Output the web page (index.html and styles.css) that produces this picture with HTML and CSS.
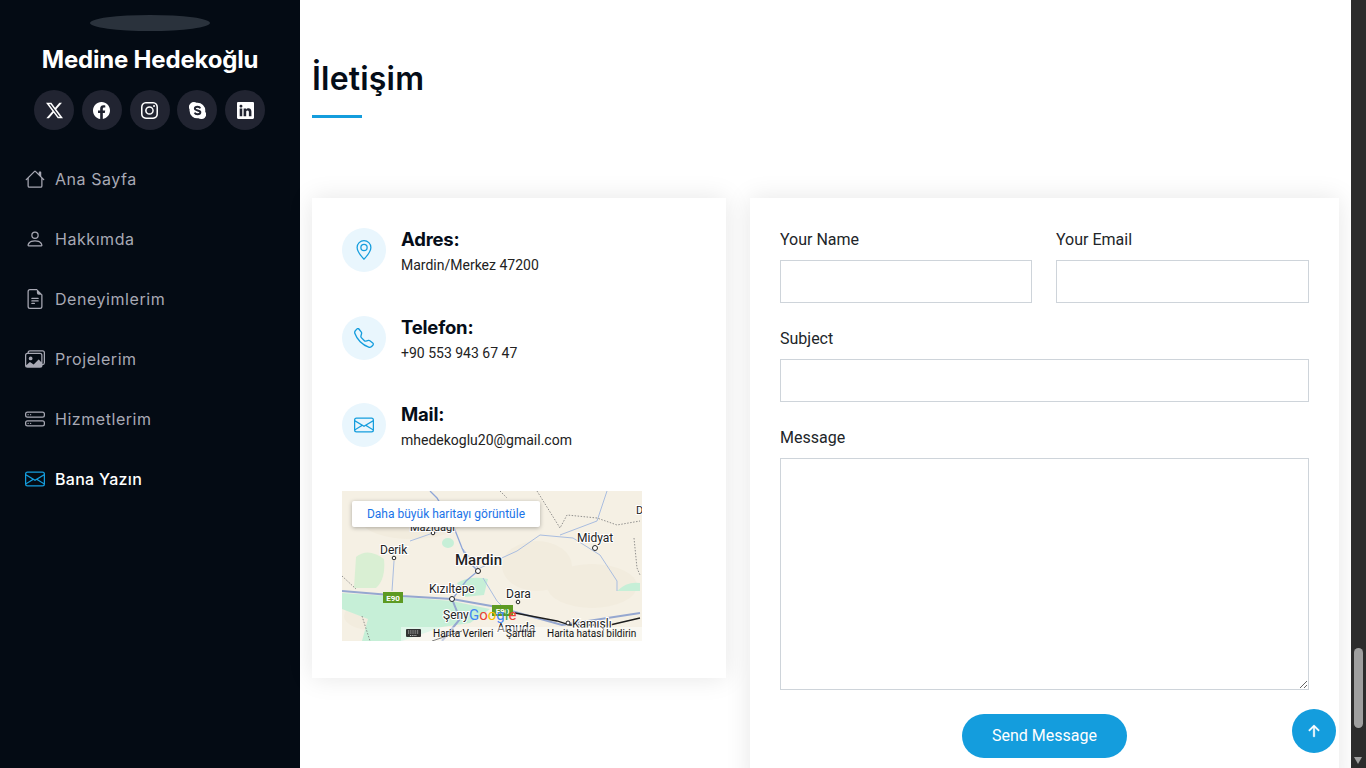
FILE: index.html
```html
<!DOCTYPE html>
<html lang="tr">
<head>
<meta charset="utf-8">
<title>Medine Hedekoğlu</title>
<link rel="stylesheet" href="styles.css">
</head>
<body>
<div class="page">
<aside class="sidebar">
  <div class="avatar"></div>
  <h1 class="name">Medine Hedekoğlu</h1>
  <div class="socials">
    <a class="social"><svg viewBox="0 0 16 16"><path d="M12.6.75h2.454l-5.36 6.142L16 15.25h-4.937l-3.867-5.07-4.425 5.07H.316l5.733-6.57L0 .75h5.063l3.495 4.633L12.601.75Zm-.86 13.028h1.36L4.323 2.145H2.865z"/></svg></a>
    <a class="social"><svg viewBox="0 0 16 16"><path d="M16 8.049c0-4.446-3.582-8.05-8-8.05C3.58 0-.002 3.603-.002 8.05c0 4.017 2.926 7.347 6.75 7.951v-5.625h-2.03V8.05H6.75V6.275c0-2.017 1.195-3.131 3.022-3.131.876 0 1.791.157 1.791.157v1.98h-1.009c-.993 0-1.303.621-1.303 1.258v1.51h2.218l-.354 2.326H9.25V16c3.824-.604 6.75-3.934 6.75-7.951"/></svg></a>
    <a class="social"><svg viewBox="0 0 16 16"><path d="M8 0C5.829 0 5.556.01 4.703.048 3.85.088 3.269.222 2.76.42a3.9 3.9 0 0 0-1.417.923A3.9 3.9 0 0 0 .42 2.76C.222 3.268.087 3.85.048 4.7.01 5.555 0 5.827 0 8.001c0 2.172.01 2.444.048 3.297.04.852.174 1.433.372 1.942.205.526.478.972.923 1.417.444.445.89.719 1.416.923.51.198 1.09.333 1.942.372C5.555 15.99 5.827 16 8 16s2.444-.01 3.298-.048c.851-.04 1.434-.174 1.943-.372a3.9 3.9 0 0 0 1.416-.923c.445-.445.718-.891.923-1.417.197-.509.332-1.09.372-1.942C15.99 10.445 16 10.173 16 8s-.01-2.445-.048-3.299c-.04-.851-.175-1.433-.372-1.941a3.9 3.9 0 0 0-.923-1.417A3.9 3.9 0 0 0 13.24.42c-.51-.198-1.092-.333-1.943-.372C10.443.01 10.172 0 7.998 0zm-.717 1.442h.718c2.136 0 2.389.007 3.232.046.78.035 1.204.166 1.486.275.373.145.64.319.92.599s.453.546.598.92c.11.281.24.705.275 1.485.039.843.047 1.096.047 3.231s-.008 2.389-.047 3.232c-.035.78-.166 1.203-.275 1.485a2.5 2.5 0 0 1-.599.919c-.28.28-.546.453-.92.598-.28.11-.704.24-1.485.276-.843.038-1.096.047-3.232.047s-2.39-.009-3.233-.047c-.78-.036-1.203-.166-1.485-.276a2.5 2.5 0 0 1-.92-.598 2.5 2.5 0 0 1-.6-.92c-.109-.281-.24-.705-.275-1.485-.038-.843-.046-1.096-.046-3.233s.008-2.388.046-3.231c.036-.78.166-1.204.276-1.486.145-.373.319-.64.599-.92s.546-.453.92-.598c.282-.11.705-.24 1.485-.276.738-.034 1.024-.044 2.515-.045zm4.988 1.328a.96.96 0 1 0 0 1.92.96.96 0 0 0 0-1.92m-4.27 1.122a4.109 4.109 0 1 0 0 8.217 4.109 4.109 0 0 0 0-8.217m0 1.441a2.667 2.667 0 1 1 0 5.334 2.667 2.667 0 0 1 0-5.334"/></svg></a>
    <a class="social"><svg viewBox="0 0 16 16"><path d="M4.67 0c.88 0 1.73.25 2.47.7a7.42 7.42 0 0 1 6.02 2.12 7.37 7.37 0 0 1 2.17 5.22q0 .51-.07 1.02a4.66 4.66 0 0 1-.62 5.9A4.67 4.67 0 0 1 11.33 16c-.88 0-1.72-.25-2.45-.69a7.4 7.4 0 0 1-8.39-7.37q0-.5.07-.99A4.66 4.66 0 0 1 1.37 1.37 4.67 4.67 0 0 1 4.67 0z"/><path class="skype-s" d="M10.6 6C10.200 4.900 9.200 4.500 8 4.500c-1.400 0-2.500.6-2.500 1.700 0 2.400 5.200 1.200 5.200 3.500 0 1.100-1.200 1.800-2.700 1.800-1.300 0-2.300-.5-2.700-1.500"/></svg></a>
    <a class="social"><svg viewBox="0 0 16 16"><path d="M0 1.146C0 .513.526 0 1.175 0h13.65C15.474 0 16 .513 16 1.146v13.708c0 .633-.526 1.146-1.175 1.146H1.175C.526 16 0 15.487 0 14.854zm4.943 12.248V6.169H2.542v7.225zm-1.2-8.212c.837 0 1.358-.554 1.358-1.248-.015-.709-.52-1.248-1.342-1.248S2.4 3.226 2.4 3.934c0 .694.521 1.248 1.327 1.248zm4.908 8.212V9.359c0-.216.016-.432.08-.586.173-.431.568-.878 1.232-.878.869 0 1.216.662 1.216 1.634v3.865h2.401V9.25c0-2.22-1.184-3.252-2.764-3.252-1.274 0-1.845.7-2.165 1.193v.025h-.016l.016-.025V6.169h-2.4c.03.678 0 7.225 0 7.225z"/></svg></a>
  </div>
  <nav class="nav">
    <a class="nav-item"><svg viewBox="0 0 16 16"><path d="M8.707 1.5a1 1 0 0 0-1.414 0L.646 8.146a.5.5 0 0 0 .708.708L2 8.207V13.5A1.5 1.5 0 0 0 3.5 15h9a1.5 1.5 0 0 0 1.5-1.5V8.207l.646.647a.5.5 0 0 0 .708-.708L13 5.793V2.5a.5.5 0 0 0-.5-.5h-1a.5.5 0 0 0-.5.5v1.293zM13 7.207V13.5a.5.5 0 0 1-.5.5h-9a.5.5 0 0 1-.5-.5V7.207l5-5z"/></svg><span>Ana Sayfa</span></a>
    <a class="nav-item"><svg viewBox="0 0 16 16"><path d="M8 8a3 3 0 1 0 0-6 3 3 0 0 0 0 6m2-3a2 2 0 1 1-4 0 2 2 0 0 1 4 0m4 8c0 1-1 1-1 1H3s-1 0-1-1 1-4 6-4 6 3 6 4m-1-.004c-.001-.246-.154-.986-.832-1.664C11.516 10.68 10.289 10 8 10s-3.516.68-4.168 1.332c-.678.678-.83 1.418-.832 1.664z"/></svg><span>Hakkımda</span></a>
    <a class="nav-item"><svg viewBox="0 0 16 16"><path d="M5.5 7a.5.5 0 0 0 0 1h5a.5.5 0 0 0 0-1zM5 9.5a.5.5 0 0 1 .5-.5h5a.5.5 0 0 1 0 1h-5a.5.5 0 0 1-.5-.5m0 2a.5.5 0 0 1 .5-.5h2a.5.5 0 0 1 0 1h-2a.5.5 0 0 1-.5-.5"/><path d="M9.5 0H4a2 2 0 0 0-2 2v12a2 2 0 0 0 2 2h8a2 2 0 0 0 2-2V4.5zm0 1v2A1.5 1.5 0 0 0 11 4.5h2V14a1 1 0 0 1-1 1H4a1 1 0 0 1-1-1V2a1 1 0 0 1 1-1z"/></svg><span>Deneyimlerim</span></a>
    <a class="nav-item"><svg viewBox="0 0 16 16"><path d="M4.502 9a1.5 1.5 0 1 0 0-3 1.5 1.5 0 0 0 0 3"/><path d="M14.002 13a2 2 0 0 1-2 2h-10a2 2 0 0 1-2-2V5A2 2 0 0 1 2 3a2 2 0 0 1 2-2h10a2 2 0 0 1 2 2v8a2 2 0 0 1-1.998 2M14 2H4a1 1 0 0 0-1 1h9.002a2 2 0 0 1 2 2v7A1 1 0 0 0 15 11V3a1 1 0 0 0-1-1M2.002 4a1 1 0 0 0-1 1v8l2.646-2.354a.5.5 0 0 1 .63-.062l2.66 1.773 3.71-3.71a.5.5 0 0 1 .577-.094l1.777 1.947V5a1 1 0 0 0-1-1z"/></svg><span>Projelerim</span></a>
    <a class="nav-item"><svg viewBox="0 0 16 16"><path d="M14 10a1 1 0 0 1 1 1v1a1 1 0 0 1-1 1H2a1 1 0 0 1-1-1v-1a1 1 0 0 1 1-1zM2 9a2 2 0 0 0-2 2v1a2 2 0 0 0 2 2h12a2 2 0 0 0 2-2v-1a2 2 0 0 0-2-2z"/><path d="M5 11.5a.5.5 0 1 1-1 0 .5.5 0 0 1 1 0m-2 0a.5.5 0 1 1-1 0 .5.5 0 0 1 1 0M14 3a1 1 0 0 1 1 1v1a1 1 0 0 1-1 1H2a1 1 0 0 1-1-1V4a1 1 0 0 1 1-1zM2 2a2 2 0 0 0-2 2v1a2 2 0 0 0 2 2h12a2 2 0 0 0 2-2V4a2 2 0 0 0-2-2z"/><path d="M5 4.5a.5.5 0 1 1-1 0 .5.5 0 0 1 1 0m-2 0a.5.5 0 1 1-1 0 .5.5 0 0 1 1 0"/></svg><span>Hizmetlerim</span></a>
    <a class="nav-item active"><svg viewBox="0 0 16 16"><path d="M0 4a2 2 0 0 1 2-2h12a2 2 0 0 1 2 2v8a2 2 0 0 1-2 2H2a2 2 0 0 1-2-2zm2-1a1 1 0 0 0-1 1v.217l7 4.2 7-4.2V4a1 1 0 0 0-1-1zm13 2.383-4.708 2.825L15 11.105zm-.034 6.876-5.64-3.471L8 9.583l-1.326-.795-5.64 3.47A1 1 0 0 0 2 13h12a1 1 0 0 0 .966-.741M1 11.105l4.708-2.897L1 5.383z"/></svg><span>Bana Yazın</span></a>
  </nav>
</aside>

<main class="main">
  <header class="section-title">
    <h2>İletişim</h2>
    <div class="title-bar"></div>
  </header>
  <div class="columns">
    <section class="card info-card">
      <div class="info-item">
        <div class="info-icon"><svg viewBox="0 0 16 16"><path d="M12.166 8.94c-.524 1.062-1.234 2.12-1.96 3.07A32 32 0 0 1 8 14.58a32 32 0 0 1-2.206-2.57c-.726-.95-1.436-2.008-1.96-3.07C3.304 7.867 3 6.862 3 6a5 5 0 0 1 10 0c0 .862-.305 1.867-.834 2.94M8 16s6-5.686 6-10A6 6 0 0 0 2 6c0 4.314 6 10 6 10"/><path d="M8 8a2 2 0 1 1 0-4 2 2 0 0 1 0 4m0 1a3 3 0 1 0 0-6 3 3 0 0 0 0 6"/></svg></div>
        <div><h4>Adres:</h4><p>Mardin/Merkez 47200</p></div>
      </div>
      <div class="info-item">
        <div class="info-icon"><svg viewBox="0 0 16 16"><path d="M3.654 1.328a.678.678 0 0 0-1.015-.063L1.605 2.3c-.483.484-.661 1.169-.45 1.77a17.6 17.6 0 0 0 4.168 6.608 17.6 17.6 0 0 0 6.608 4.168c.601.211 1.286.033 1.77-.45l1.034-1.034a.678.678 0 0 0-.063-1.015l-2.307-1.794a.68.68 0 0 0-.58-.122l-2.19.547a1.75 1.75 0 0 1-1.657-.459L5.482 8.062a1.75 1.75 0 0 1-.46-1.657l.548-2.19a.68.68 0 0 0-.122-.58zM1.884.511a1.745 1.745 0 0 1 2.612.163L6.29 2.98c.329.423.445.974.315 1.494l-.547 2.19a.68.68 0 0 0 .178.643l2.457 2.457a.68.68 0 0 0 .644.178l2.189-.547a1.75 1.75 0 0 1 1.494.315l2.306 1.794c.829.645.905 1.87.163 2.611l-1.034 1.034c-.74.74-1.846 1.065-2.877.702a18.6 18.6 0 0 1-7.01-4.42 18.6 18.6 0 0 1-4.42-7.009c-.362-1.03-.037-2.137.703-2.877z"/></svg></div>
        <div><h4>Telefon:</h4><p>+90 553 943 67 47</p></div>
      </div>
      <div class="info-item">
        <div class="info-icon"><svg viewBox="0 0 16 16"><path d="M0 4a2 2 0 0 1 2-2h12a2 2 0 0 1 2 2v8a2 2 0 0 1-2 2H2a2 2 0 0 1-2-2zm2-1a1 1 0 0 0-1 1v.217l7 4.2 7-4.2V4a1 1 0 0 0-1-1zm13 2.383-4.708 2.825L15 11.105zm-.034 6.876-5.64-3.471L8 9.583l-1.326-.795-5.64 3.47A1 1 0 0 0 2 13h12a1 1 0 0 0 .966-.741M1 11.105l4.708-2.897L1 5.383z"/></svg></div>
        <div><h4>Mail:</h4><p>mhedekoglu20@gmail.com</p></div>
      </div>
      <svg class="map" viewBox="0 0 300 150">
        <rect width="300" height="150" fill="#f5f0e4"/>
        <g fill="#f2ecde">
          <ellipse cx="70" cy="30" rx="50" ry="18"/><ellipse cx="250" cy="95" rx="45" ry="22"/><ellipse cx="195" cy="75" rx="35" ry="25"/><ellipse cx="30" cy="125" rx="28" ry="14"/>
        </g>
        <g fill="#c6efd7">
          <path d="M0 102 L60 106 L110 110 L148 118 L128 132 L100 136 L60 150 L20 150 L26 128 L0 118Z"/>
          <path d="M115 92 Q128 84 146 88 L142 104 L122 106Z"/>
          <ellipse cx="106" cy="52" rx="6" ry="5"/>
          <path d="M275 100 Q285 90 298 92 L298 100Z"/>
        </g>
        <path d="M14 66 Q26 56 42 68 Q44 88 34 97 L12 97Z" fill="#d9efd3"/>
        <g fill="none" stroke="#a9bde0" stroke-width="1">
          <path d="M120 57 L136 77"/>
          <path d="M138 77 L175 60 L198 44 L231 47 L258 64 L275 90 L275 100"/>
          <path d="M265 0 L255 30 L218 44"/>
          <path d="M141 87 L155 110 L165 120"/>
          <path d="M52 70 L50 100"/>
          <path d="M68 50 L91 42 L111 36"/>
        </g>
        <path d="M88 0 L95 7 L111 34 L120 57 L126 70 L136 80 L124 90 L112 106" fill="none" stroke="#8fa6d8" stroke-width="1.300"/>
        <path d="M0 100 L60 105 L110 108 L155 116 L220 134 L298 122" fill="none" stroke="#95a7d0" stroke-width="2"/>
        <path d="M110 108 L118 128 L100 150" fill="none" stroke="#95a7d0" stroke-width="2"/>
        <path d="M173 122 L215 130 L228 134 L268 134 L298 127" fill="none" stroke="#1d1d1d" stroke-width="1.300"/>
        <path d="M120 140 L90 150" fill="none" stroke="#1d1d1d" stroke-width="1"/>
        <g fill="none" stroke="#777" stroke-width=".8" stroke-dasharray="1.500 1.500">
          <path d="M158 0 L165 7 M195 0 L218 37 L225 24 L255 27 L275 34 L298 30"/>
          <path d="M292 47 L295 77 L298 84"/>
          <path d="M0 85 L14 98"/>
          <path d="M20 125 L28 150"/>
        </g>
        <g fill="#fff" stroke="#222" stroke-width="1">
          <circle cx="91" cy="42" r="1.800"/><circle cx="52" cy="67" r="1.800"/><circle cx="136" cy="80" r="2.500"/>
          <circle cx="253" cy="57" r="2.500"/><circle cx="110" cy="108" r="2.500"/><circle cx="176" cy="111" r="1.800"/><circle cx="226" cy="132" r="2"/>
        </g>
        <g class="map-shield">
          <rect x="41" y="101" width="20" height="11" fill="#5d9a22"/><text x="51" y="110" text-anchor="middle">E90</text>
          <rect x="150" y="114" width="21" height="11" fill="#5d9a22"/><text x="160.500" y="123" text-anchor="middle">E90</text>
        </g>
        <g class="map-label">
          <text x="68" y="40" class="t11">Mazıdağı</text>
          <text x="38" y="63" class="t12">Derik</text>
          <text x="113" y="74" class="t15">Mardin</text>
          <text x="235" y="51" class="t12">Midyat</text>
          <text x="87" y="102" class="t12">Kızıltepe</text>
          <text x="164" y="107" class="t12">Dara</text>
          <text x="101" y="128" class="t12">Şeny</text>
          <text x="155" y="141" class="t12">Amuda</text>
          <text x="230" y="137" class="t12">Kamışlı</text>
          <text x="294" y="23" class="t11">D</text>
        </g>
        <text class="map-google" x="127" y="129"><tspan fill="#4285f4">G</tspan><tspan fill="#ea4335">o</tspan><tspan fill="#fbbc05">o</tspan><tspan fill="#4285f4">g</tspan><tspan fill="#34a853">l</tspan><tspan fill="#ea4335">e</tspan></text>
        <rect x="59" y="136" width="241" height="14" fill="#fff" fill-opacity=".45"/>
        <rect x="64" y="138" width="15" height="8" rx="1" fill="#333"/>
        <path d="M66 140h11M66 142h11M68 144.500h7" stroke="#fff" stroke-width=".7" stroke-dasharray="1 .8"/>
        <g class="map-attr">
          <text x="91" y="146">Harita Verileri</text>
          <text x="164" y="146">Şartlar</text>
          <text x="205" y="146">Harita hatası bildirin</text>
        </g>
        <rect class="map-btn" x="10" y="10" width="188" height="26" rx="2" fill="#fff"/>
        <text class="map-link" x="104" y="27" text-anchor="middle">Daha büyük haritayı görüntüle</text>
      </svg>
    </section>
    <section class="card form-card">
      <form class="form">
        <div class="form-row">
          <label class="field"><span>Your Name</span><input type="text"></label>
          <label class="field"><span>Your Email</span><input type="text"></label>
        </div>
        <label class="field"><span>Subject</span><input type="text"></label>
        <label class="field"><span>Message</span><textarea></textarea></label>
        <div class="submit-row"><button type="button" class="send">Send Message</button></div>
      </form>
    </section>
  </div>
</main>
<div class="scrollbar">
  <div class="thumb"></div>
  <div class="arrow"></div>
</div>
</div>
<a class="to-top"><svg viewBox="0 0 16 16"><path d="M8 12a.5.5 0 0 0 .5-.5V5.707l2.146 2.147a.5.5 0 0 0 .708-.708l-3-3a.5.5 0 0 0-.708 0l-3 3a.5.5 0 1 0 .708.708L7.500 5.707V11.500a.5.5 0 0 0 .5.5"/></svg></a>
</body>
</html>
```
FILE: styles.css
```css
* { box-sizing: border-box; }
html, body { margin: 0; height: 768px; overflow: hidden; background: #fff; }
body { font-family: Roboto, sans-serif; color: #000; }
.page { display: flex; height: 768px; overflow: hidden; }

.sidebar { width: 300px; flex: none; background: #040b14; padding-top: 15px; }
.avatar { width: 120px; height: 16px; border-radius: 50%; background: #2a323c; margin: 0 auto; }
.name { margin: 14px 0 0; text-align: center; color: #fff; font: 700 24px/30px Inter, sans-serif; letter-spacing: -.2px; }
.socials { display: flex; gap: 7.800px; margin-top: 15px; padding-left: 34px; }
.social { width: 40px; height: 40px; border-radius: 50%; background: #212431; display: flex; align-items: center; justify-content: center; }
.social svg { width: 17px; height: 17px; fill: #fff; }
.skype-s { fill: none; stroke: #212431; stroke-width: 1.800; }
.nav { margin-top: 19px; display: flex; flex-direction: column; }
.nav-item { height: 60px; display: flex; align-items: center; gap: 10px; padding-left: 25px; color: #a8a9b4; font: 400 16px Inter, sans-serif; letter-spacing: .55px; }
.nav-item svg { width: 20px; height: 20px; fill: #a8a9b4; }
.nav-item.active { color: #fff; font-weight: 500; letter-spacing: .3px; }
.nav-item.active svg { fill: #149ddd; }

.main { flex: 1; min-width: 0; padding: 58px 12px 0; }
.section-title { margin-bottom: 80px; }
.section-title h2 { margin: 0 0 15px; font: 600 32px/42px Inter, sans-serif; letter-spacing: .2px; color: #050d18; }
.title-bar { width: 50px; height: 3px; background: #149ddd; }
.columns { display: flex; gap: 24px; align-items: flex-start; }
.card { background: #fff; padding: 30px; box-shadow: 0 0 24px rgba(0, 0, 0, .1); }
.info-card { width: 414px; height: 480px; flex: none; }
.form-card { flex: 1; min-width: 0; }

.info-item { display: flex; gap: 15px; height: 57.500px; margin-bottom: 30px; }
.info-icon { width: 44px; height: 44px; border-radius: 50%; background: #e9f6fd; display: flex; align-items: center; justify-content: center; flex: none; }
.info-icon svg { width: 20px; height: 20px; fill: #149ddd; }
.info-item h4 { margin: -1px 0 4px; font: 700 18.500px/24px Inter, sans-serif; letter-spacing: -.2px; color: #050d18; }
.info-item p { margin: 0; font-size: 14px; line-height: 21px; color: #222; }

.map { display: block; width: 300px; height: 150px; margin-top: 5px; }
.map-label text { font-family: Roboto, sans-serif; fill: #222; paint-order: stroke; stroke: #fff; stroke-width: 2px; }
.t11 { font-size: 11px; }
.t12 { font-size: 12px; }
.t15 { font-size: 15px; font-weight: 500; }
.map-shield text { font: 700 8px Roboto, sans-serif; fill: #fff; }
.map-google { font: 400 15px Roboto, sans-serif; }
.map-attr text { font: 10px Roboto, sans-serif; fill: #111; }
.map-btn { filter: drop-shadow(0 1px 2px rgba(0, 0, 0, .3)); }
.map-link { font: 12px Roboto, sans-serif; fill: #1a73e8; }

.form { display: flex; flex-direction: column; gap: 24px; }
.form-row { display: grid; grid-template-columns: 252px 1fr; gap: 24px; }
.field { display: flex; flex-direction: column; gap: 8px; font-size: 16px; line-height: 24px; color: #212529; }
.field input, .field textarea { width: 100%; border: 1px solid #ced4da; background: #fff; outline: none; display: block; margin: 0; }
.field input { height: 43px; }
.field textarea { height: 232px; resize: vertical; }
.submit-row { display: flex; justify-content: center; }
.send { width: 165px; height: 44px; border: 0; border-radius: 22px; background: #149ddd; color: #fff; font: 400 16px Roboto, sans-serif; padding: 0 0 2px; }

.scrollbar { width: 15px; flex: none; background: #2c2c2c; position: relative; }
.thumb { position: absolute; left: 3px; top: 648px; width: 9px; height: 80px; border-radius: 5px; background: #9f9f9f; }
.arrow { position: absolute; left: 3px; top: 757px; border-left: 4.500px solid transparent; border-right: 4.500px solid transparent; border-top: 7px solid #9f9f9f; }
.to-top { position: fixed; left: 1292px; top: 709px; width: 44px; height: 44px; border-radius: 50%; background: #149ddd; display: flex; align-items: center; justify-content: center; }
.to-top svg { width: 24px; height: 24px; fill: #fff; stroke: #fff; stroke-width: .3; }
```
